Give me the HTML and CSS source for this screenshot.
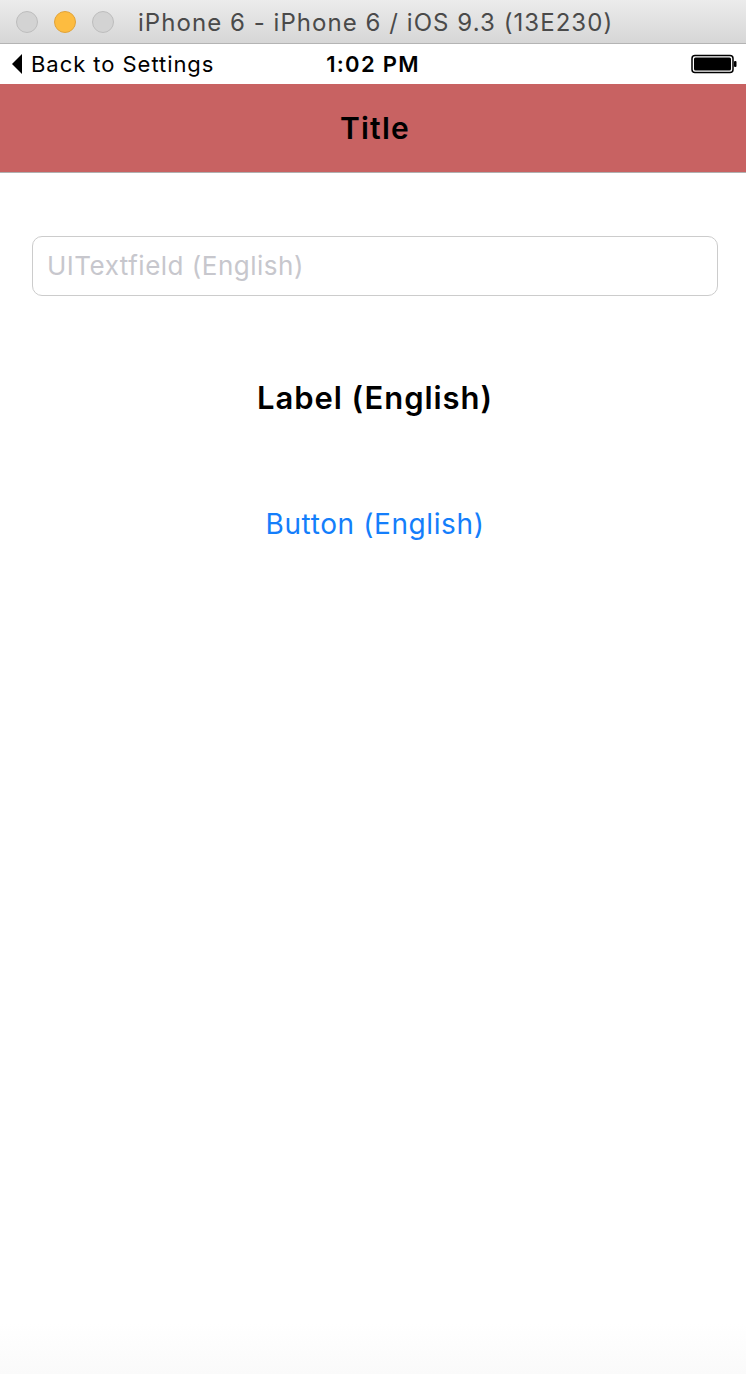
FILE: index.html
```html
<!DOCTYPE html>
<html>
<head>
<meta charset="utf-8">
<link rel="stylesheet" href="styles.css">
</head>
<body>
<div class="window">
  <div class="titlebar">
    <div class="lights">
      <span class="light gray"></span>
      <span class="light yellow"></span>
      <span class="light gray"></span>
    </div>
    <div class="wintitle">iPhone 6 - iPhone 6 / iOS 9.3 (13E230)</div>
  </div>
  <div class="statusbar">
    <div class="back">
      <svg class="backarrow" width="11" height="20" viewBox="0 0 11 20"><path d="M10 0 L10 20 L0 10 Z" fill="#000"/></svg>
      <span>Back to Settings</span>
    </div>
    <div class="time">1:02 PM</div>
    <div class="battery">
      <svg width="46" height="20" viewBox="0 0 46 20">
        <rect x="1" y="1.5" width="41" height="17" rx="3" ry="3" fill="none" stroke="#000" stroke-width="1.5"/>
        <rect x="3" y="3.5" width="37" height="13" rx="1.5" fill="#000"/>
        <rect x="43" y="7" width="2.5" height="6" rx="1" fill="#000"/>
      </svg>
    </div>
  </div>
  <div class="navbar"><span>Title</span></div>
  <main class="content">
    <div class="textfield"><span class="placeholder">UITextfield (English)</span></div>
    <div class="label">Label (English)</div>
    <div class="button">Button (English)</div>
  </main>
</div>
</body>
</html>
```

FILE: styles.css
```css
html, body {
  margin: 0;
  padding: 0;
  background: #fff;
}
body {
  font-family: Inter, "Noto Sans", "Liberation Sans", sans-serif;
  width: 746px;
  height: 1374px;
  overflow: hidden;
}
.window {
  display: flex;
  flex-direction: column;
  height: 1374px;
}
.titlebar {
  height: 43px;
  border-bottom: 1px solid #b4b4b4;
  background: linear-gradient(#ececec, #d6d6d6);
  display: flex;
  align-items: center;
  flex-shrink: 0;
}
.lights {
  display: flex;
  gap: 16px;
  padding-left: 16px;
  width: 106px;
  box-sizing: content-box;
}
.light {
  width: 22px;
  height: 22px;
  border-radius: 50%;
  box-sizing: border-box;
}
.light.gray {
  background: #d3d3d3;
  border: 1px solid #bdbdbd;
}
.light.yellow {
  background: #fdbc40;
  border: 1px solid #e1a33a;
}
.wintitle {
  margin-left: 16px;
  margin-top: 2px;
  font-size: 24px;
  color: #4a4a4a;
  letter-spacing: 1.05px;
}
.statusbar {
  height: 40px;
  display: flex;
  align-items: center;
  position: relative;
  flex-shrink: 0;
}
.back {
  display: flex;
  align-items: center;
  gap: 8px;
  padding-left: 12px;
  font-size: 22px;
  letter-spacing: 0.95px;
  color: #000;
}
.time {
  position: absolute;
  left: 0;
  right: 0;
  text-align: center;
  font-size: 22px;
  font-weight: 600;
  letter-spacing: 1.3px;
  pointer-events: none;
}
.battery {
  margin-left: auto;
  margin-right: 9px;
  display: flex;
  align-items: center;
}
.navbar {
  height: 88px;
  background: #c86262;
  border-bottom: 1px solid #b0b0b0;
  display: flex;
  align-items: center;
  justify-content: center;
  flex-shrink: 0;
}
.navbar span {
  font-size: 30px;
  font-weight: 600;
  letter-spacing: 1.2px;
  color: #000;
  padding-left: 4px;
}
.content {
  flex: 1;
  display: flex;
  flex-direction: column;
  align-items: center;
  padding-top: 63px;
  background: linear-gradient(#fff 0, #fff 1150px, #fafafa 100%);
}
.textfield {
  width: 686px;
  height: 60px;
  border: 1px solid #cccccc;
  border-radius: 10px;
  box-sizing: border-box;
  display: flex;
  align-items: center;
  padding-left: 14px;
  align-self: flex-start;
  margin-left: 32px;
}
.placeholder {
  font-size: 26px;
  letter-spacing: 0.5px;
  color: #c7c7cd;
  margin-top: -2px;
}
.label {
  margin-top: 83px;
  font-size: 31px;
  font-weight: 600;
  letter-spacing: 0.95px;
  color: #000;
  padding-left: 4px;
}
.button {
  margin-top: 91px;
  font-size: 28px;
  letter-spacing: 0.6px;
  color: #147efb;
  padding-left: 4px;
}
```
